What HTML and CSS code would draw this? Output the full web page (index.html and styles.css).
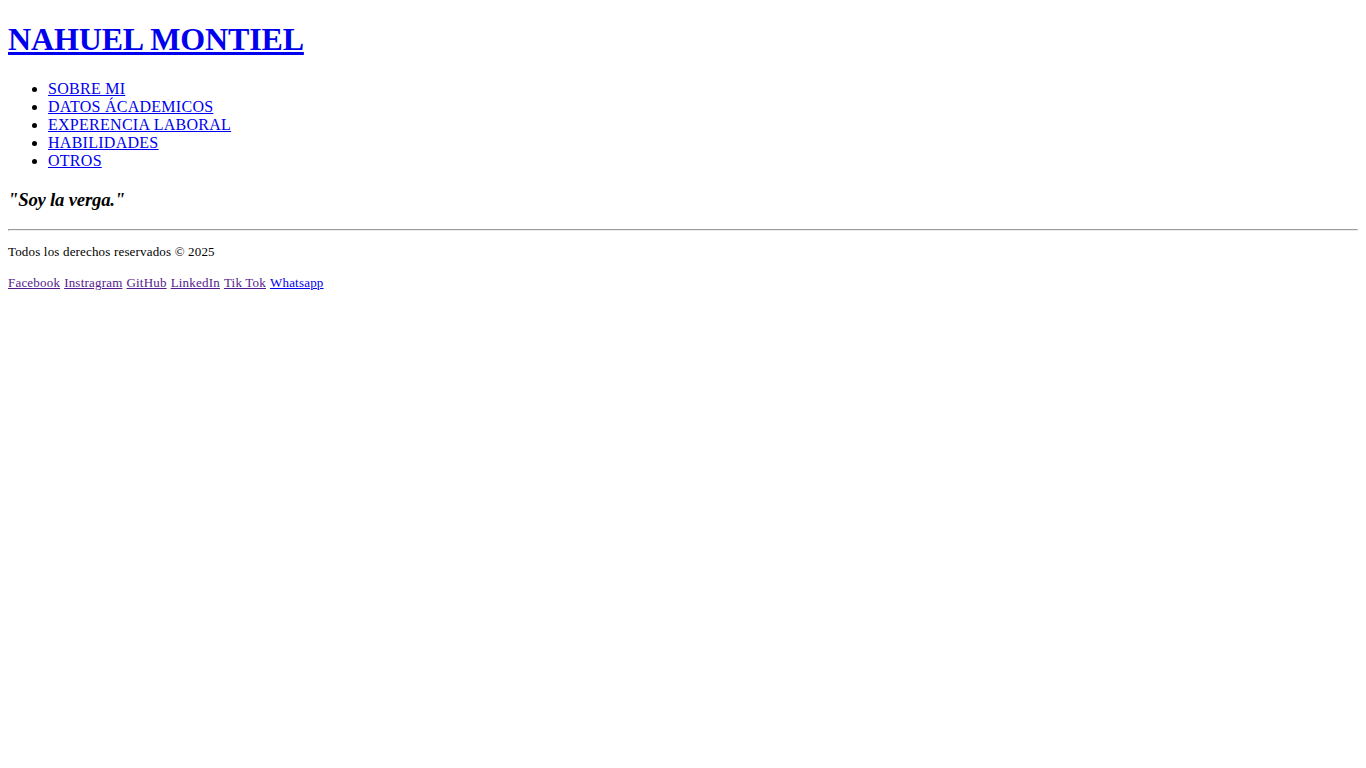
FILE: index.html
```html
<!DOCTYPE html>
<html lang="es">
<head>
<meta charset="utf-8">
<title>Nahuel Montiel</title>
<link rel="stylesheet" href="styles.css">
</head>
<body>
<header class="site-header">
  <h1 class="title"><a class="link" href="#">NAHUEL MONTIEL</a></h1>
  <nav class="nav">
    <ul class="nav-list">
      <li><a class="link" href="#">SOBRE MI</a></li>
      <li><a class="link" href="#">DATOS ÁCADEMICOS</a></li>
      <li><a class="link" href="#">EXPERENCIA LABORAL</a></li>
      <li><a class="link" href="#">HABILIDADES</a></li>
      <li><a class="link" href="#">OTROS</a></li>
    </ul>
  </nav>
</header>
<main class="content">
  <h3 class="quote"><em>"Soy la verga."</em></h3>
</main>
<footer class="site-footer">
  <hr class="rule">
  <p class="small">Todos los derechos reservados © 2025</p>
  <div class="social"><a class="link visited" href="#">Facebook</a> <a class="link visited" href="#">Instragram</a> <a class="link visited" href="#">GitHub</a> <a class="link visited" href="#">LinkedIn</a> <a class="link visited" href="#">Tik Tok</a> <a class="link" href="#">Whatsapp</a></div>
</footer>
</body>
</html>
```
FILE: styles.css
```css
html, body {
  font-family: "Liberation Serif", "Times New Roman", serif;
  color: #000;
  background: #fff;
}
body {
  margin: 0;
  padding: 0 8px 8px;
}
.title {
  font-size: 2em;
  margin: 0.67em 0;
  letter-spacing: -0.14px;
}
.nav-list {
  margin: 1em 0;
  padding-left: 40px;
  letter-spacing: 0.27px;
}
.link {
  color: #0000ee;
}
.link.visited {
  color: #551a8b;
}
.quote {
  font-size: 1.17em;
  margin: 1em 0;
  letter-spacing: -0.2px;
}
.rule {
  margin: 8px 0;
}
.small {
  font-size: small;
  margin: 1em 0;
  letter-spacing: 0.17px;
}
.social {
  margin: 0;
}
.social .link {
  font-size: small;
  letter-spacing: 0.2px;
}
```
